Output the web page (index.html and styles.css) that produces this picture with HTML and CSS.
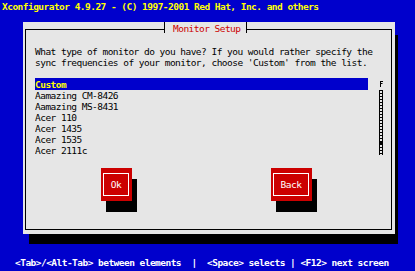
FILE: index.html
```html
<!DOCTYPE html>
<html>
<head>
<meta charset="utf-8">
<link rel="stylesheet" href="styles.css">
</head>
<body>
<div class="screen">
  <div class="topbar">Xconfigurator 4.9.27 - (C) 1997-2001 Red Hat, Inc. and others</div>
  <div class="dialog">
    <div class="frame">
      <div class="title"><span class="tick"></span><span class="title-text">Monitor Setup</span><span class="tick"></span></div>
      <div class="intro">
        <div class="line">What type of monitor do you have? If you would rather specify the</div>
        <div class="line">sync frequencies of your monitor, choose 'Custom' from the list.</div>
      </div>
      <div class="listbox">
        <div class="list">
          <div class="item selected">Custom</div>
          <div class="item">Aamazing CM-8426</div>
          <div class="item">Aamazing MS-8431</div>
          <div class="item">Acer 110</div>
          <div class="item">Acer 1435</div>
          <div class="item">Acer 1535</div>
          <div class="item">Acer 2111c</div>
        </div>
        <div class="scrollbar">
          <svg class="arrow" width="5" height="6" viewBox="0 0 5 6"><path d="M1.5 0V6M1.5 0.5H4M1.5 2.5H3.5" stroke="#000" stroke-width="1" fill="none"/></svg>
          <div class="track"><div class="thumb"></div></div>
        </div>
      </div>
      <div class="buttons">
        <div class="btn btn-ok"><div class="btn-inner">Ok</div></div>
        <div class="btn btn-back"><div class="btn-inner">Back</div></div>
      </div>
    </div>
  </div>
  <div class="status">&lt;Tab&gt;/&lt;Alt-Tab&gt; between elements  |  &lt;Space&gt; selects | &lt;F12&gt; next screen</div>
</div>
</body>
</html>
```

FILE: styles.css
```css
* { box-sizing: border-box; }
html, body { margin: 0; padding: 0; }
body {
  background: #0000cc;
  font-family: "DejaVu Sans Mono", "Liberation Mono", monospace;
  font-size: 9.5px;
  letter-spacing: -0.53px;
}
.screen {
  width: 415px;
  height: 271px;
  overflow: hidden;
  display: flex;
  flex-direction: column;
}
.topbar {
  height: 22px;
  padding: 1px 0 0 2px;
  line-height: 12px;
  color: #ffff00;
  font-weight: bold;
  white-space: pre;
  flex: none;
}
.dialog {
  flex: none;
  margin-left: 23px;
  width: 372px;
  height: 212px;
  background: #e6e6e6;
  padding: 7px 0 0 2px;
  box-shadow: 4.5px 11.5px 0 -1.5px #000;
}
.frame {
  position: relative;
  width: 367px;
  height: 201px;
  border: 1px solid #000;
}
.title {
  position: absolute;
  left: 138px;
  top: -8px;
  height: 11px;
  display: flex;
  background: #e6e6e6;
}
.tick {
  width: 1px;
  height: 11px;
  background: #000;
}
.title-text {
  width: 81px;
  height: 11px;
  padding-left: 8px;
  line-height: 13px;
  color: #cc0000;
  white-space: pre;
}
.intro {
  margin-top: 16px;
  padding-left: 9px;
}
.line {
  height: 11px;
  line-height: 11px;
  white-space: pre;
  color: #000;
}
.listbox {
  display: flex;
  margin: 10px 0 0 9px;
  height: 77px;
}
.list {
  width: 333px;
  height: 77px;
  overflow: hidden;
}
.item {
  height: 11px;
  line-height: 13px;
  white-space: pre;
  color: #000;
}
.item.selected {
  background: #0000cc;
  box-shadow: 0 1px 0 #0000cc;
  color: #ffff00;
  font-weight: bold;
  position: relative;
}
.scrollbar {
  margin-left: 11px;
  width: 5px;
  display: flex;
  flex-direction: column;
  padding-top: 3px;
}
.arrow { display: block; }
.track {
  margin-top: 3px;
  width: 4px;
  height: 65px;
  border-left: 1px solid #000;
  border-right: 1px solid #000;
  background: repeating-linear-gradient(to bottom, #000 0 1px, transparent 1px 3px);
  display: flex;
  flex-direction: column;
}
.thumb {
  margin-top: 52px;
  height: 3px;
  background: #000;
  margin-left: -1px;
  margin-right: -1px;
}
.buttons {
  display: flex;
  gap: 139px;
  margin-top: 13px;
  padding-left: 75px;
}
.btn {
  height: 33px;
  background: #cc0000;
  box-shadow: 5px 11px 0 #000;
  padding: 5px 3px 5px 2px;
}
.btn-ok { width: 31px; }
.btn-back { width: 41px; }
.btn-inner {
  height: 23px;
  border: 1px solid #fff;
  color: #fff;
  display: flex;
  align-items: center;
  justify-content: center;
  line-height: 11px;
}
.status {
  flex: none;
  margin-top: 23px;
  padding-left: 15px;
  line-height: 12px;
  color: #fff;
  font-weight: bold;
  white-space: pre;
}
```
